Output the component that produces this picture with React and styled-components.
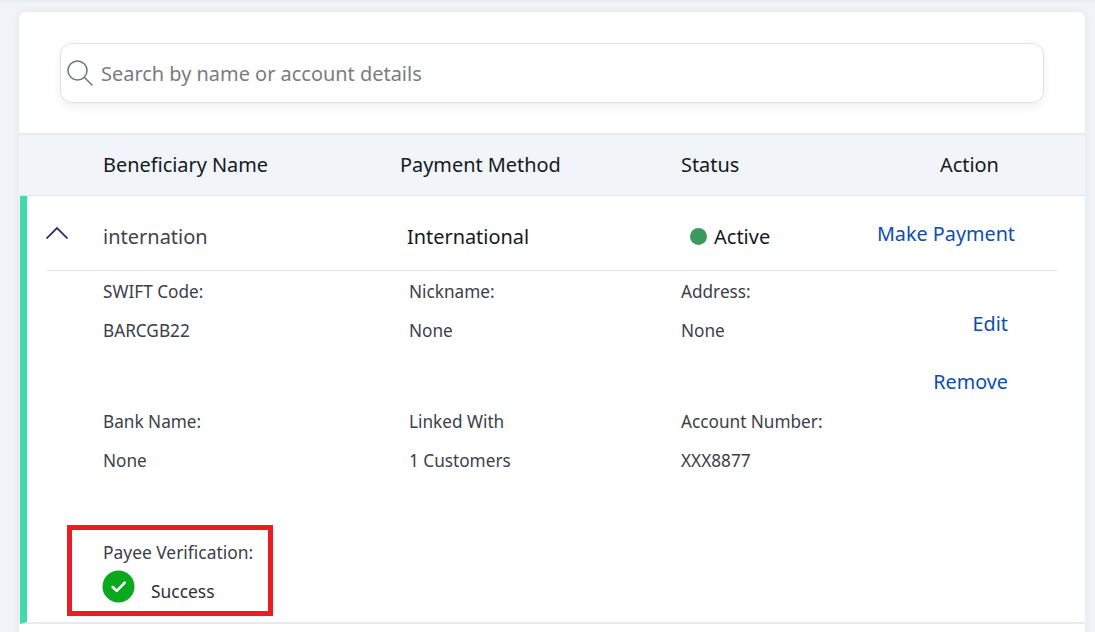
import styled, { createGlobalStyle } from "styled-components";

const GlobalStyle = createGlobalStyle`
  html, body {
    margin: 0;
    padding: 0;
    height: 632px;
    overflow: hidden;
    background: #f0f3f7;
    font-family: "Noto Sans", "Open Sans", sans-serif;
  }
  * { box-sizing: border-box; }
`;

const Page = styled.div`
  height: 632px;
  padding: 10px 10px 0 19px;
  border-top: 2px solid #e9edf3;
  overflow: hidden;
`;

const Card = styled.div`
  background: #fff;
  border-radius: 6px 6px 0 0;
  height: 640px;
  box-shadow: 0 0 6px rgba(180, 190, 205, 0.25);
`;

const SearchArea = styled.div`
  padding: 31px 41px 30px 41px;
  height: 121px;
`;

const SearchBox = styled.div`
  height: 60px;
  display: flex;
  align-items: center;
  padding-left: 6px;
  gap: 8px;
  border: 1px solid #dfe1e5;
  border-radius: 12px;
  background: #fff;
  box-shadow: 0 4px 10px rgba(30, 40, 60, 0.07);
`;

const SearchText = styled.span`
  font-size: 19.95px;
  color: #7b7c80;
`;

const HeaderRow = styled.div`
  height: 63px;
  padding-bottom: 2px;
  display: grid;
  grid-template-columns: 84px 297px 281px 259px 1fr;
  align-items: center;
  background: #f1f4f8;
  border-top: 2px solid #e6ebf1;
  border-bottom: 1px solid #e3e7ec;
  font-size: 19.9px;
  color: #15191f;
`;

const HeaderCell = styled.div`
  grid-column: ${(p) => p.$col};
  white-space: nowrap;
`;

const Row = styled.div`
  height: 428px;
  border-left: 7px solid #3ddcaa;
  margin-left: 1px;
  border-bottom: 2px solid #e6ebf3;
`;

const MainRow = styled.div`
  height: 75px;
  margin: 0 28px 0 20px;
  padding: 6px 42px 0 0;
  display: grid;
  grid-template-columns: 56px 304px 274px 1fr auto;
  align-items: center;
  border-bottom: 1px solid #e3e8ee;
`;

const Chevron = styled.svg`
  width: 22px;
  height: 12px;
  margin-bottom: 6px;
  margin-left: -1px;
`;

const Name = styled.div`
  font-size: 20px;
  color: #3f4349;
`;

const Method = styled.div`
  font-size: 19.9px;
  color: #16191e;
`;

const Status = styled.div`
  display: flex;
  align-items: center;
  gap: 7px;
  padding-left: 9px;
  font-size: 20px;
  color: #16191e;
`;

const Dot = styled.span`
  width: 17px;
  height: 17px;
  border-radius: 50%;
  background: #3c9a5f;
`;

const ActionLink = styled.a`
  color: #0d4db0;
  font-size: 19.8px;
  line-height: 26px;
  white-space: nowrap;
  cursor: pointer;
`;

const MakePayment = styled(ActionLink)`
  margin-bottom: 5px;
`;

const Details = styled.div`
  margin: 0 77px 0 76px;
  padding-top: 10px;
  display: grid;
  grid-template-columns: 306px 272px 1fr auto;
  grid-template-rows: 130px 114px;
`;

const Field = styled.div`
  display: flex;
  flex-direction: column;
  gap: 17px;
  font-size: 17.2px;
  line-height: 22px;
  color: #3b4048;
`;

const ActionStack = styled.div`
  display: flex;
  flex-direction: column;
  align-items: flex-end;
  gap: 32px;
  padding-top: 30px;
`;

const Verification = styled.div`
  margin-left: 40px;
  width: 206px;
  height: 91px;
  border: 5px solid #ed1c24;
  padding: 11px 0 0 31px;
  font-size: 17.4px;
  line-height: 22px;
  color: #3b4048;
`;

const SuccessLine = styled.div`
  display: flex;
  align-items: flex-end;
  gap: 16px;
  margin-top: 7px;
  color: #2c3038;
`;

const SuccessIcon = styled.svg`
  width: 33px;
  height: 33px;
  margin-left: -1px;
`;

const SuccessText = styled.span`
  padding-bottom: 1px;
`;

const fields = [
  ["SWIFT Code:", "BARCGB22"],
  ["Nickname:", "None"],
  ["Address:", "None"],
];

const moreFields = [
  ["Bank Name:", "None"],
  ["Linked With", "1 Customers"],
  ["Account Number:", "XXX8877"],
];

export default function App() {
  return (
    <>
      <GlobalStyle />
      <Page>
        <Card>
          <SearchArea>
            <SearchBox>
              <svg width="26" height="26" viewBox="0 0 26 26" fill="none" stroke="#6d7288" strokeWidth="1.5">
                <circle cx="10.5" cy="10.5" r="9.5" />
                <path d="M17.5 17.5 L25.5 25.5" />
              </svg>
              <SearchText>Search by name or account details</SearchText>
            </SearchBox>
          </SearchArea>
          <HeaderRow>
            <HeaderCell $col={2}>Beneficiary Name</HeaderCell>
            <HeaderCell $col={3}>Payment Method</HeaderCell>
            <HeaderCell $col={4}>Status</HeaderCell>
            <HeaderCell $col={5}>Action</HeaderCell>
          </HeaderRow>
          <Row>
            <MainRow>
              <Chevron viewBox="0 0 22 12" fill="none" stroke="#2b3272" strokeWidth="1.8">
                <path d="M0.5 11.5 L11 1 L21.5 11.5" />
              </Chevron>
              <Name>internation</Name>
              <Method>International</Method>
              <Status>
                <Dot />
                Active
              </Status>
              <MakePayment>Make Payment</MakePayment>
            </MainRow>
            <Details>
              {fields.map(([label, value]) => (
                <Field key={label}>
                  <span>{label}</span>
                  <span>{value}</span>
                </Field>
              ))}
              <ActionStack>
                <ActionLink>Edit</ActionLink>
                <ActionLink>Remove</ActionLink>
              </ActionStack>
              {moreFields.map(([label, value]) => (
                <Field key={label}>
                  <span>{label}</span>
                  <span>{value}</span>
                </Field>
              ))}
            </Details>
            <Verification>
              Payee Verification:
              <SuccessLine>
                <SuccessIcon viewBox="0 0 34 34">
                  <circle cx="17" cy="17" r="16.5" fill="#0aa81e" />
                  <path d="M11 17.5 L15.2 21.5 L23.5 13" fill="none" stroke="#fff" strokeWidth="2.6" strokeLinecap="round" strokeLinejoin="round" />
                </SuccessIcon>
                <SuccessText>Success</SuccessText>
              </SuccessLine>
            </Verification>
          </Row>
        </Card>
      </Page>
    </>
  );
}
